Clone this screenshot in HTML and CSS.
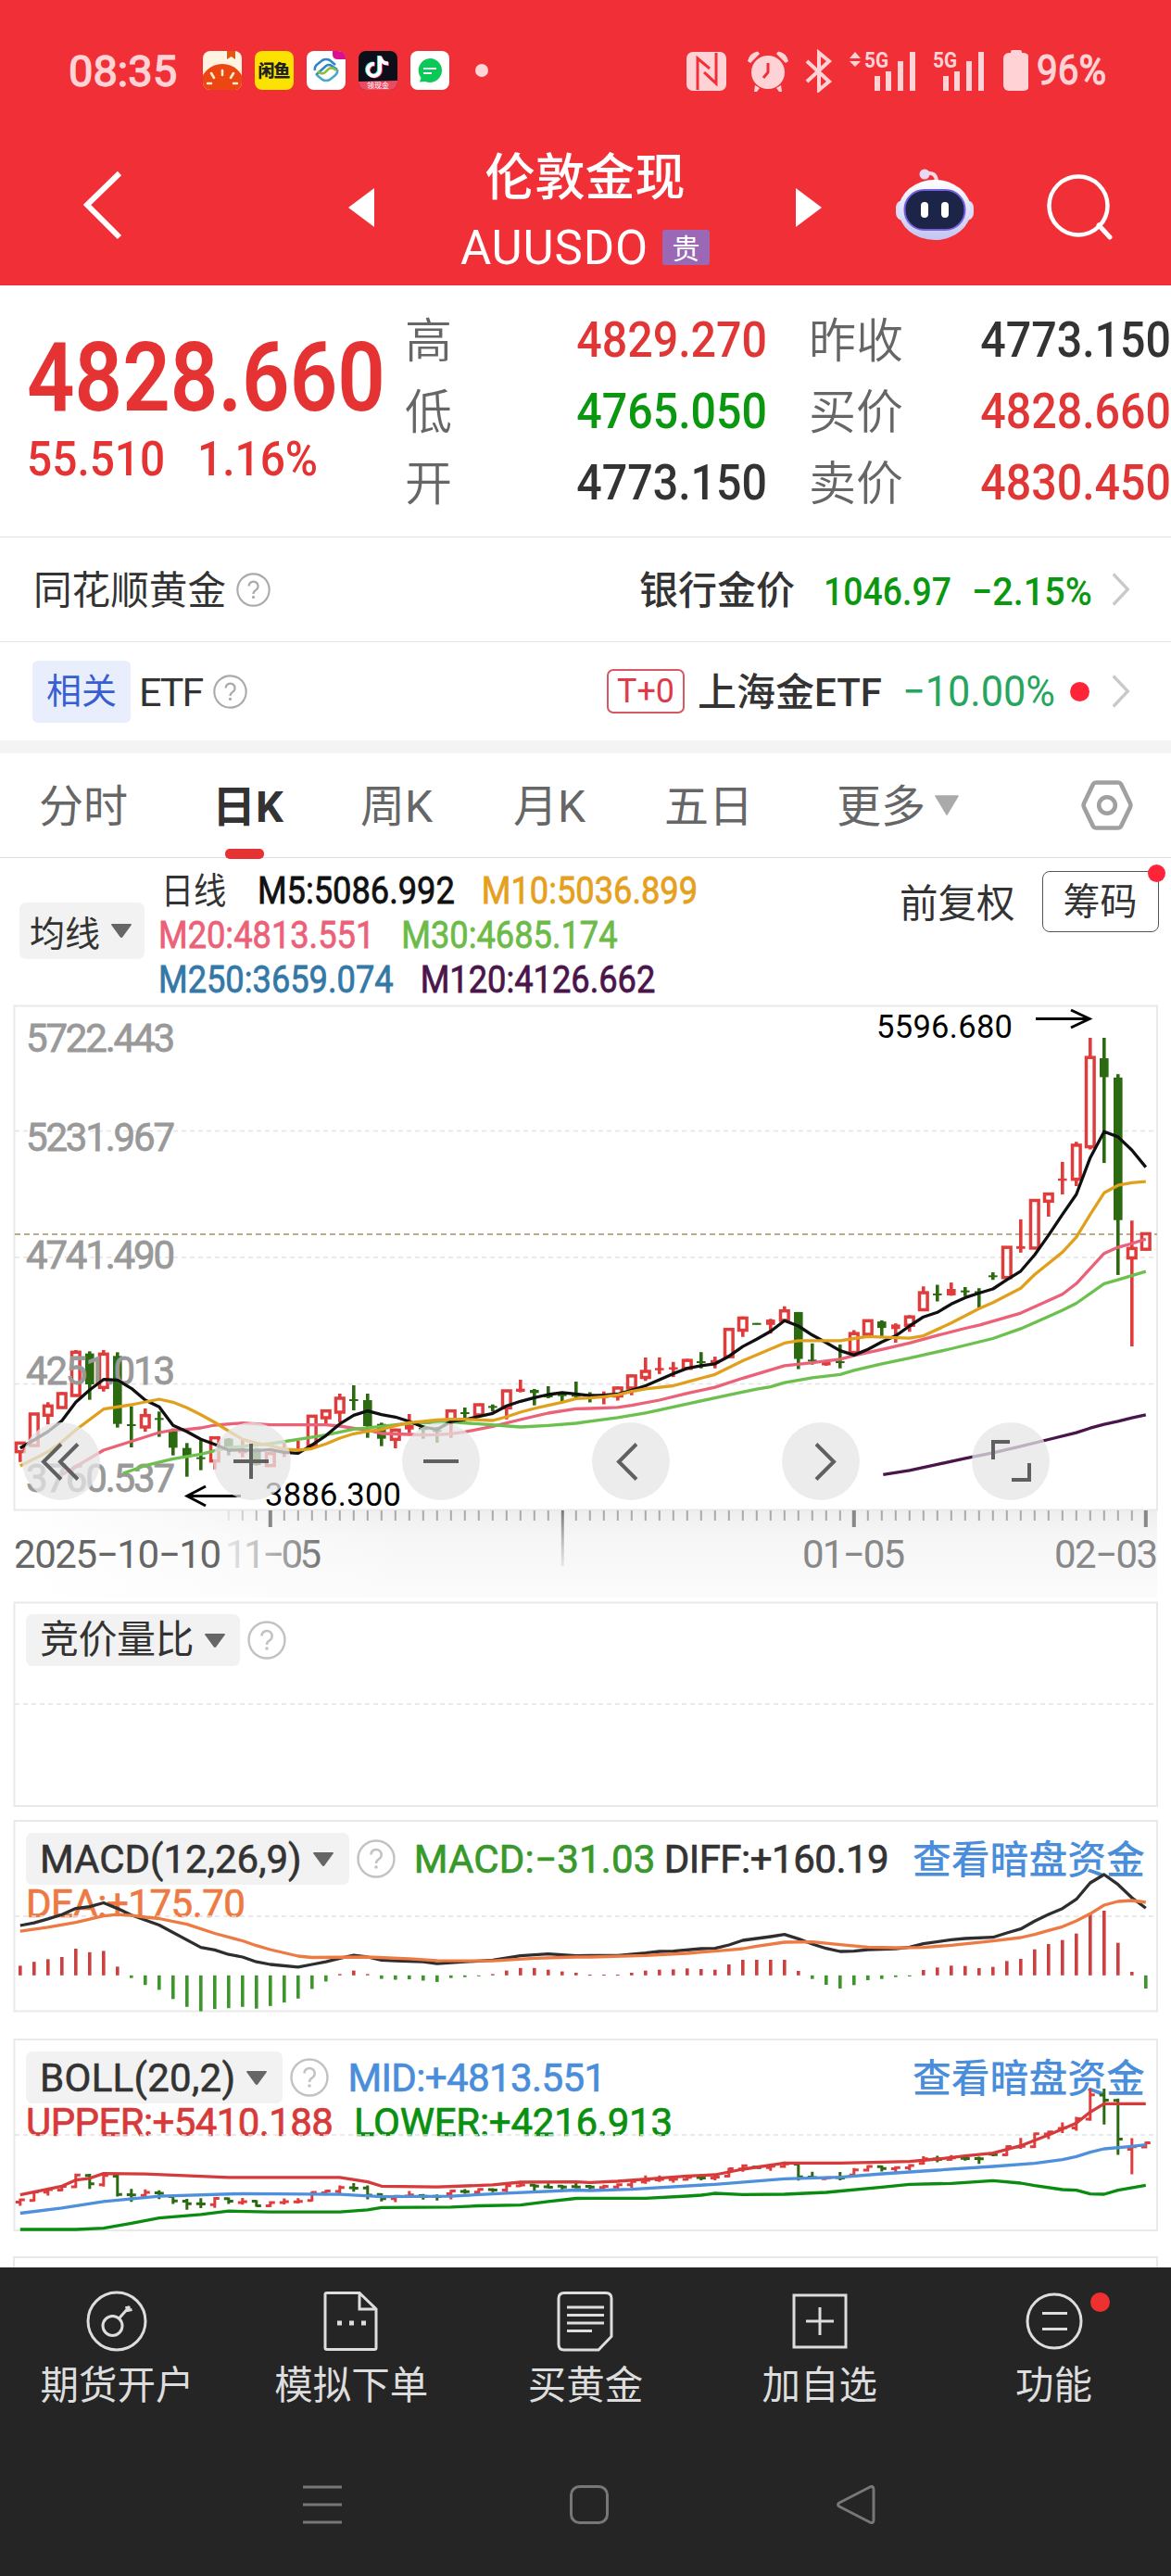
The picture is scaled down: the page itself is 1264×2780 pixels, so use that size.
FILE: index.html
```html
<!DOCTYPE html>
<html lang="zh-CN">
<head>
<meta charset="utf-8">
<title>伦敦金现 AUUSDO</title>
<link rel="stylesheet" href="styles.css">
</head>
<body>
<svg class="defs" width="0" height="0">
  <symbol id="help" viewBox="0 0 42 42"><circle cx="21" cy="21" r="19.5" fill="none" stroke="currentColor" stroke-width="2.4"/><path d="M15.5 16.5a5.6 5.6 0 1 1 8.4 4.9c-2 1.2-2.9 2-2.9 4.6" fill="none" stroke="currentColor" stroke-width="2.5"/><circle cx="21" cy="30" r="1.8" fill="currentColor"/></symbol>
  <symbol id="chev" viewBox="0 0 24 42"><path d="M3 3l17 18L3 39" fill="none" stroke="#c9c9c9" stroke-width="3.6"/></symbol>
  <symbol id="drop" viewBox="0 0 22 15"><path d="M1 0h20q1.500 0 .6 1.500L12.500 14q-1.500 1.800-3 0L.4 1.500Q-.5 0 1 0z" fill="#666"/></symbol>
</svg>

<header class="top">
  <div class="status">
    <span class="clock">08:35</span>
    <svg class="apps" width="320" height="42" viewBox="219 55 320 42">
      <clipPath id="r1"><rect x="219" y="55" width="42" height="42" rx="8"/></clipPath>
      <clipPath id="r4"><rect x="387" y="55" width="42" height="42" rx="8"/></clipPath>
      <g clip-path="url(#r1)"><path fill="#fff3e2" d="M219 55h42v42h-42z"/><path fill="#e2560f" d="M245 55h9v9l-4.500-3-4.500 3z"/><circle cx="240" cy="93" r="24" fill="#ec4713"/><path d="M240 82v-5M231 85l-3-5M249 85l3-5M228 91h-4M252 91h4" transform="translate(0 -1)" stroke="#fff0cf" stroke-width="2.600" stroke-linecap="round"/></g>
      <rect x="275" y="55" width="42" height="42" rx="8" fill="#fbe200"/><text x="278.500" y="83" class="app-cn" textLength="35">闲鱼</text>
      <rect x="331" y="55" width="42" height="42" rx="8" fill="#fff"/><path d="M359 55h6q8 0 8 8v1h-8q-6 0-6-5z" fill="#d9108f"/><g fill="none" stroke-width="2.600"><path d="M340 76q-1-4 3-7l5-4q4-2 8 0l6 5M341 81l11-10q3-2 6 0l6 4" stroke="#2f86c4"/><path d="M364 75q1 4-3 7l-5 4q-4 2-8 0l-6-5" stroke="#49a7c8"/><path d="M343 77q4 4 8 1l4-4q4-2 8 2" stroke="#8fbf3a"/></g>
      <g clip-path="url(#r4)"><path fill="#0c0e1a" d="M387 55h42v42h-42z"/><g fill="none" stroke-width="4"><path d="M409 60v15a6.500 6.500 0 1 1-6-6.500M409 61q2 7 9 7" stroke="#31e3e0"/><path d="M411 61v15a6.500 6.500 0 1 1-6-6.500M411 62q2 7 9 7" stroke="#fe2c55"/><path d="M410 60.500v15a6.500 6.500 0 1 1-6-6.500M410 61.500q2 7 9 7" stroke="#fff"/></g><path fill="#ea4a62" d="M387 88l42-1v10h-42z"/><text x="396" y="95" class="app-tag">领现金</text></g>
      <rect x="443" y="55" width="42" height="42" rx="8" fill="#fff"/><path d="M464 63a13 13 0 1 1-5 25l-6 .5 1.500-4.500A13 13 0 0 1 464 63z" fill="#0bc956"/><path d="M457 74h14M457 79h9" stroke="#fff" stroke-width="1.800"/>
      <circle cx="520" cy="76" r="7" fill="#ffd5d7"/>
    </svg>
    <svg class="sys" width="370" height="48" viewBox="740 51 370 48">
      <g fill="#ffd3d6">
        <rect x="741" y="55" width="43" height="42" rx="7"/><path d="M753 96V62l13 11M773 56v33l-13-12" fill="none" stroke="#f12f37" stroke-width="3"/>
        <circle cx="829" cy="77" r="18"/><path d="M807 65q2-9 11-10.500l2 2.500-10 10zM851 65q-2-9-11-10.500l-2 2.500 10 10zM815 91l5 3-3 4h-3zM843 91l-5 3 3 4h3z"/><path d="M829 67v10l-5 6" fill="none" stroke="#f12f37" stroke-width="3"/>
        <path d="M871 65l24 22-11 9V56l11 9-24 22" fill="none" stroke="#ffd3d6" stroke-width="4"/>
        <path d="M917 62l6-7 6 7zM917 65h12l-6 6zM944 81h6v16h-6zM956 76h6v21h-6zM969 65h6v32h-6zM982 55h6v42h-6zM1018 81h6v16h-6zM1030 76h6v21h-6zM1043 65h6v32h-6zM1056 55h6v42h-6z"/>
        <rect x="1083" y="56" width="28" height="41" rx="6"/><rect x="1091" y="53" width="12" height="6" rx="2"/>
        <text x="933" y="72" class="g5" textLength="26" lengthAdjust="spacingAndGlyphs">5G</text><text x="1007" y="72" class="g5" textLength="26" lengthAdjust="spacingAndGlyphs">5G</text>
      </g>
    </svg>
    <span class="batt">96%</span>
  </div>
  <div class="bar">
    <svg class="back" width="44" height="76" viewBox="90 183 44 76"><path d="M129 187L94 221l35 35" fill="none" stroke="#fff" stroke-width="6"/></svg>
    <svg class="prev" width="28" height="42" viewBox="0 0 28 42"><path d="M28 0v42L0 21z" fill="#fff"/></svg>
    <div class="title"><h1>伦敦金现</h1><p><span>AUUSDO</span><b>贵</b></p></div>
    <svg class="next" width="28" height="42" viewBox="0 0 28 42"><path d="M0 0v42l28-21z" fill="#fff"/></svg>
    <svg class="bot" width="86" height="80" viewBox="966 181 86 80">
      <defs><linearGradient id="bg" x2="0" y2="1"><stop stop-color="#fff"/><stop offset="1" stop-color="#c3c4f2"/></linearGradient></defs>
      <path d="M999 187q11-2 12 8" fill="none" stroke="#f6d9e6" stroke-width="4"/><circle cx="998" cy="188" r="5.500" fill="#e9d9f2"/>
      <rect x="967" y="216" width="84" height="22" rx="8" fill="#dcdcfa"/><ellipse cx="1009" cy="226.500" rx="39" ry="32.500" fill="url(#bg)"/>
      <rect x="976.500" y="205" width="65" height="43" rx="21" fill="#1c2447" stroke="#7460e0" stroke-width="2"/><rect x="994" y="218" width="8" height="17" rx="4" fill="#fff"/><rect x="1016" y="218" width="8" height="17" rx="4" fill="#fff"/>
    </svg>
    <svg class="find" width="72" height="72" viewBox="1130 187 72 72"><circle cx="1164" cy="222" r="31.500" fill="none" stroke="#fff" stroke-width="4.500"/><path d="M1186 243l12 13" stroke="#fff" stroke-width="5" stroke-linecap="round"/></svg>
  </div>
</header>

<section class="quote">
  <div class="last"><div class="price"><span>4828.660</span></div><div class="chg"><span>55.510</span><span>1.16%</span></div></div>
  <dl class="q1"><dt>高</dt><dd class="up">4829.270</dd><dt>低</dt><dd class="dn">4765.050</dd><dt>开</dt><dd>4773.150</dd></dl>
  <dl class="q2"><dt>昨收</dt><dd>4773.150</dd><dt>买价</dt><dd class="up">4828.660</dd><dt>卖价</dt><dd class="up">4830.450</dd></dl>
</section>

<section class="row row-a">
  <span class="name">同花顺黄金</span><svg class="h36"><use href="#help"/></svg>
  <span class="push strong">银行金价</span><span class="n1">1046.97</span><span class="n2">−2.15%</span><svg class="go"><use href="#chev"/></svg>
</section>
<section class="row row-b">
  <span class="rel">相关</span><span class="etf">ETF</span><svg class="h36"><use href="#help"/></svg>
  <span class="push t0">T+0</span><span class="strong shetf">上海金ETF</span><span class="n3">−10.00%</span><i class="dot"></i><svg class="go"><use href="#chev"/></svg>
</section>

<nav class="tabs">
  <a>分时</a><a class="on">日K</a><a>周K</a><a>月K</a><a>五日</a><a class="more">更多</a>
  <svg class="tri" width="26" height="22" viewBox="0 0 26 22"><path d="M1 1h24L13 21z" fill="#aaa" stroke="#aaa" stroke-width="1.500" stroke-linejoin="round"/></svg>
  <svg class="hex" width="58" height="56" viewBox="0 0 58 56"><path d="M17 3.500h24q2 0 3 1.700L54 26q1 2 0 4L44 50.800q-1 1.700-3 1.700H17q-2 0-3-1.700L4 30q-1-2 0-4L14 5.200q1-1.700 3-1.700z" fill="none" stroke="#a0a0a0" stroke-width="4.600"/><circle cx="29" cy="28" r="8.800" fill="none" stroke="#a0a0a0" stroke-width="4.600"/></svg>
</nav>

<section class="legend">
  <div class="chip avg">均线<svg class="dr"><use href="#drop"/></svg></div>
  <div class="mas">
    <p><span class="day">日线</span><span class="m5">M5:5086.992</span><span class="m10">M10:5036.899</span></p>
    <p><span class="m20">M20:4813.551</span><span class="m30">M30:4685.174</span></p>
    <p><span class="m250">M250:3659.074</span><span class="m120">M120:4126.662</span></p>
  </div>
  <span class="fq">前复权</span><span class="cm">筹码<i></i></span>
</section>

<section class="kchart">
  <svg id="k" width="1264" height="644" viewBox="0 1080 1264 644">
    <defs>
      <linearGradient id="shv" x2="0" y2="1"><stop stop-color="#eee"/><stop offset=".3" stop-color="#f6f6f6"/><stop offset="1" stop-color="#fbfbfb"/></linearGradient>
      <linearGradient id="shh"><stop stop-color="#fff"/><stop offset=".35" stop-color="#fff" stop-opacity="0"/></linearGradient>
      <linearGradient id="fade" gradientUnits="userSpaceOnUse" x1="240" x2="345" y1="0" y2="0"><stop stop-color="#777" stop-opacity=".1"/><stop offset="1" stop-color="#777"/></linearGradient>
      <linearGradient id="longtick" gradientUnits="userSpaceOnUse" x1="0" x2="0" y1="1630" y2="1692"><stop stop-color="#777"/><stop offset="1" stop-color="#aaa" stop-opacity=".2"/></linearGradient>
    </defs>
    <rect x="15" y="1630" width="1234" height="94" fill="url(#shv)"/><rect x="14" y="1630" width="1236" height="94" fill="url(#shh)"/>
    <path d="M15.500 1629.500V1085.500H1249V1629.500z" class="frame"/>
    <path d="M16 1220.500H1249M16 1357H1249M16 1493.500H1249" class="grid"/>
    <path d="M16 1332H1249" stroke="#b9ad86" stroke-width="2" stroke-dasharray="6 4"/>
    <g id="ticks"></g><g id="candles"></g>
    <g class="scale"><text x="28" y="1135" textLength="161">5722.443</text><text x="28" y="1242" textLength="161">5231.967</text><text x="28" y="1369" textLength="161">4741.490</text><text x="28" y="1494" textLength="161">4251.013</text><text x="28" y="1610" textLength="161">3760.537</text></g>
    <g id="mas" class="line"></g>
    <g class="mark"><text x="946" y="1120" textLength="147">5596.680</text><text x="286" y="1625" textLength="147">3886.300</text><path d="M1118 1099.500h56M1156 1090l20 9.500-20 9.500M260 1614.500h-57M222 1604l-20 10.500 20 10.500"/></g>
    <g class="date"><text x="15" y="1692" textLength="224" fill="#666">2025−10−10</text><text x="243" y="1692" textLength="104" fill="url(#fade)">11−05</text><text x="866" y="1692" textLength="111" fill="#888">01−05</text><text x="1138" y="1692" textLength="112" fill="#888">02−03</text></g>
    <g fill="#e6e6e6" fill-opacity=".75"><circle cx="66" cy="1577" r="42"/><circle cx="272" cy="1577" r="42"/><circle cx="476" cy="1577" r="42"/><circle cx="681" cy="1577" r="42"/><circle cx="886" cy="1577" r="42"/><circle cx="1091" cy="1577" r="42"/></g>
    <path class="ctl" d="M66 1558.500l-19 19 19 19M84 1558.500l-19 19 19 19M252 1577h38M271 1558v38M457 1577h38M687 1558.500l-19 19 19 19M881 1558.500l19 19-19 19M1072 1575v-19h18M1111 1579v18h-19"/>
  </svg>
</section>

<section class="panel p1">
  <svg class="art" width="1264" height="224" viewBox="0 1727 1264 224"><path d="M15.500 1729.500H1249V1949H15.500z" class="frame"/><path d="M16 1839H1249" class="grid"/></svg>
  <div class="head"><span class="chip">竞价量比<svg class="dr"><use href="#drop"/></svg></span><svg class="h42"><use href="#help"/></svg></div>
</section>
<section class="panel p2">
  <div class="head"><span class="chip"><span class="lat">MACD(12,26,9)</span><svg class="dr"><use href="#drop"/></svg></span><svg class="h42"><use href="#help"/></svg><span class="v macd">MACD:−31.03</span><span class="v diff">DIFF:+160.19</span><a>查看暗盘资金</a></div>
  <div class="sub"><span class="dea">DEA:+175.70</span></div>
  <svg class="art" id="macd" width="1264" height="210" viewBox="0 1963 1264 210"><path d="M15.500 1965H1249V2170.500H15.500z" class="frame"/><path d="M16 2068H1249" class="grid"/></svg>
</section>
<section class="panel p3">
  <div class="head"><span class="chip"><span class="lat boll">BOLL(20,2)</span><svg class="dr"><use href="#drop"/></svg></span><svg class="h42"><use href="#help"/></svg><span class="v mid">MID:+4813.551</span><a>查看暗盘资金</a></div>
  <div class="sub"><span class="upper">UPPER:+5410.188</span><span class="lower">LOWER:+4216.913</span></div>
  <svg class="art" id="boll" width="1264" height="210" viewBox="0 2199 1264 210"><path d="M15.500 2201H1249V2407H15.500z" class="frame"/><path d="M16 2304H1249" class="grid"/></svg>
</section>
<div class="peek"></div>

<footer>
  <nav class="acts">
    <a><svg width="66" height="66" viewBox="0 0 66 66"><circle cx="33" cy="33" r="31"/><circle cx="28.500" cy="38" r="10.500"/><path d="M35.500 30L47 17M43.500 17l1 4.500 5-1"/></svg>期货开户</a>
    <a><svg width="66" height="66" viewBox="0 0 66 66"><path d="M5 4q0-1.500 2-1.500h35l18 17.500v42q0 1.500-2 1.500H7q-2 0-2-1.500zM42 3v17h18"/><path d="M18 35h5M31 35h5M44 35h5" stroke-width="5"/></svg>模拟下单</a>
    <a><svg width="66" height="66" viewBox="0 0 66 66"><path d="M10 2.500h45q6 0 6 6v41L47 64H10q-6 0-6-6V8.500q0-6 6-6zM13 18h40M13 26.500h40M13 35h40M13 43.500h27"/></svg>买黄金</a>
    <a><svg width="66" height="66" viewBox="0 0 66 66"><path d="M5 5h56v56H5zM33 18v30M18 33h30"/></svg>加自选</a>
    <a><svg width="66" height="66" viewBox="0 0 66 66"><circle cx="33" cy="33" r="29"/><path d="M20 24.500h27M20 41.500h27"/></svg>功能<i></i></a>
  </nav>
  <div class="keys">
    <svg width="42" height="42" viewBox="0 0 42 42"><path d="M0 2h42M0 21h42M0 40h42"/></svg>
    <svg width="42" height="42" viewBox="0 0 42 42"><rect x="1.500" y="1.500" width="39" height="39" rx="9"/></svg>
    <svg width="42" height="42" viewBox="0 0 42 42"><path d="M36 2q4-2 4 3v32q0 5-4 3L3 23q-3-2 0-4z"/></svg>
  </div>
</footer>
<script src="chart.js"></script>
</body>
</html>
```
FILE: styles.css
```css
* { box-sizing: border-box; margin: 0; padding: 0; }
body { width: 1264px; height: 2780px; overflow: hidden; background: #fff; color: #333; font-family: Roboto, "Noto Sans CJK SC", sans-serif; }
svg { display: block; flex: none; }
span, a, dt, dd { white-space: nowrap; }
.defs { position: absolute; }
.top { height: 308px; background: #f12f37; color: #fff; }
.status { height: 124px; padding: 28px 0 0 74px; display: flex; align-items: center; color: #ffd3d6; }
.clock { width: 145px; font-size: 47px; -webkit-text-stroke: 1.4px; }
.apps { margin-right: 201px; }
.batt { margin-left: 9px; font-size: 44px; -webkit-text-stroke: 1.2px; transform: scaleX(.92); transform-origin: left; }
.app-cn { font: 900 18px "Noto Sans CJK SC"; fill: #222; }
.app-tag { font: 8px "Noto Sans CJK SC"; fill: #fff; }
.g5 { font: 700 23px Roboto; }
.bar { height: 184px; display: flex; }
.back { margin: 59px 0 0 90px; }
.prev { margin: 79px 0 0 242px; }
.title { width: 455px; text-align: center; }
.title h1 { margin-top: 31px; font: 500 54px/66px "Noto Sans CJK SC"; }
.title p { margin-top: 19px; display: flex; justify-content: center; align-items: center; height: 54px; font-size: 51px; }
.title p span { letter-spacing: .9px; }
.title b { margin-left: 15px; width: 51px; height: 38px; background: #9a68b4; border-radius: 3px; font: 400 30px/36px "Noto Sans CJK SC"; }
.next { margin-top: 79px; }
.bot { margin: 57px 0 0 79px; }
.find { margin: 63px 0 0 78px; }

.quote { height: 272px; border-bottom: 1.5px solid #e1e1e1; display: flex; padding-top: 18px; }
.last { width: 437px; padding-left: 29px; color: #e53333; }
.price { height: 110px; margin-top: 27px; font-size: 103px; line-height: 110px; font-weight: 600; }
.price span { display: block; transform: scaleX(.877); transform-origin: left; }
.chg { display: flex; font-size: 52px; line-height: 60px; margin-top: 3px; font-weight: 500; }
.chg span { width: 184px; transform: scaleX(.92); transform-origin: left; }
dl { display: grid; grid-auto-rows: 77px; line-height: 77px; }
.q1 { width: 391px; grid-template-columns: 90px 1fr; }
.q2 { width: 436px; padding-left: 45px; grid-template-columns: 120px 1fr; }
dt { font-size: 51px; color: #666; font-weight: 350; font-family: "Noto Sans CJK SC"; }
dd { font-size: 53px; font-weight: 500; text-align: right; transform: scaleX(.912); transform-origin: right; padding-top: 3px; }
.up { color: #e03636; }
.dn { color: #0b970f; }

.row { display: flex; align-items: center; padding-right: 43px; }
.row-a { height: 113px; border-bottom: 1.5px solid #e4e4e4; padding-left: 36px; }
.row-b { height: 106px; padding-left: 35px; }
.name { font-size: 41.6px; line-height: 60px; padding-top: 4px; }
.h36 { width: 37px; height: 37px; color: #aaa; margin-left: 11px; }
.push { margin-left: auto; }
.strong { font-size: 42px; line-height: 60px; font-weight: 500; padding-top: 4px; }
.n1, .n2 { color: #0b970f; font-size: 43px; font-weight: 500; transform-origin: left; padding-top: 3px; }
.n1 { width: 160px; margin-left: 31px; transform: scaleX(.87); }
.n2 { width: 127px; transform: scaleX(.92); }
.go { width: 22px; height: 40px; margin-left: 23px; }
.rel { width: 106px; height: 67px; border-radius: 6px; background: #e8eefc; color: #385fd2; font-size: 38px; line-height: 67px; text-align: center; }
.etf { font-size: 43px; margin-left: 9px; width: 70px; letter-spacing: -2px; padding-top: 2px; }
.row-b .h36 { margin-left: 10px; }
.row-b .t0 { width: 84px; height: 48px; border: 2px solid #d75762; border-radius: 7px; color: #dd3b4c; font-size: 36px; line-height: 44px; text-align: center; }
.shetf { width: 201px; margin-left: 14px; letter-spacing: 0; }
.n3 { width: 164px; margin-left: 20px; color: #26a55e; font-size: 46px; transform: scaleX(.94); transform-origin: left; }
.dot { width: 21px; height: 21px; border-radius: 50%; background: #ff2438; margin-left: 17px; }

.tabs { height: 127px; border-top: 14px solid #f4f4f4; border-bottom: 1.5px solid #ddd; display: flex; align-items: center; font-size: 48px; line-height: 70px; color: #666; }
.tabs a { position: relative; top: 2px; }
.tabs a:nth-child(1) { margin-left: 42px; width: 187px; }
.tabs a:nth-child(2) { width: 160px; color: #333; font-weight: 700; font-size: 47px; }
.tabs a:nth-child(3) { width: 165px; }
.tabs a:nth-child(4) { width: 163px; }
.tabs a:nth-child(5) { width: 186px; }
.tabs a:nth-child(6) { width: 106px; }
.tabs .on::after { content: ""; position: absolute; left: 14px; bottom: -21px; width: 42px; height: 11px; border-radius: 5px; background: #e53333; }
.hex { margin-left: 131px; }

.legend { height: 154px; display: flex; position: relative; }
.chip { display: flex; align-items: center; background: #f2f2f2; border-radius: 7px; }
.dr { width: 22px; height: 15px; margin-left: 12px; }
.avg { width: 135px; height: 61px; margin: 48px 0 0 21px; padding-left: 11px; font-size: 38px; }
.mas { width: 800px; margin: 11px 0 0 15px; transform: scaleX(.906); transform-origin: left; }
.mas p { height: 48px; line-height: 50px; font-size: 40px; display: flex; gap: 32px; }
.day { font-size: 39px; width: 84px; margin-left: 3px; }
.mas .day { margin-right: -1px; }
.m5 { color: #111; } .m10 { color: #e5a01e; } .m20 { color: #eb6178; } .m30 { color: #6cbb49; } .m250 { color: #3478a8; } .m120 { color: #4a154b; }
.mas p span:not(.day) { -webkit-text-stroke: .8px; }
.fq { margin: 20px 0 0 0; font-size: 41.500px; line-height: 60px; }
.cm { position: relative; margin: 14px 0 0 29px; width: 126px; height: 66px; border: 1.5px solid #555; border-radius: 8px; font-size: 40px; line-height: 66px; text-align: center; }
.cm i { position: absolute; right: -8px; top: -8px; width: 19px; height: 19px; border-radius: 50%; background: #ff2438; }

.kchart { height: 647px; }
.frame { fill: none; stroke: #e9e9e9; stroke-width: 2; }
.grid { stroke: #e4e4e4; stroke-width: 1.5; stroke-dasharray: 5 4; }
.scale, .date { font: 42px Roboto; }
.scale text, .date text { stroke-width: .8px; }
.scale { fill: #999; stroke: #999; }
.mark { font: 34.500px Roboto; fill: #000; }
.mark path { fill: none; stroke: #000; stroke-width: 3; }
.line { fill: none; stroke-linejoin: round; }
.ctl { fill: none; stroke: #606060; stroke-width: 4; }

.panel { position: relative; height: 236px; }
.art { position: absolute; left: 0; top: 0; }
.head { display: flex; align-items: center; padding: 15px 0 0 28px; height: 71px; font-size: 42px; position: relative; }
.head .chip { height: 56px; padding: 0 17px 0 15px; }
.p1 .chip { padding-right: 16px; letter-spacing: -.5px; line-height: 52px; }
.head .h42 { width: 42px; height: 42px; margin-left: 8px; color: #c2c2c2; }
.head a { position: absolute; left: 985px; top: 15px; font-size: 41.8px; line-height: 60px; color: #4a8edb; font-weight: 500; }
.v { -webkit-text-stroke: .7px; }
.lat { -webkit-text-stroke: .6px; }
.lat.boll { letter-spacing: .3px; }
.macd { margin-left: 20px; color: #38982a; width: 270px; letter-spacing: .2px; }
.diff { color: #333; letter-spacing: -.5px; }
.mid { margin-left: 20px; color: #4a8edb; letter-spacing: -.6px; }
.sub { display: flex; padding-left: 28px; height: 44px; line-height: 44px; margin-top: -1px; font-size: 42px; -webkit-text-stroke: .7px; }
.dea { color: #ee7a43; letter-spacing: -.5px; }
.upper { color: #d83a3a; width: 354px; letter-spacing: -.6px; }
.lower { color: #0a9010; letter-spacing: -.25px; }
.peek { height: 12px; margin: 0 14px; border: 2px solid #e9e9e9; border-bottom: 0; }

footer { height: 333px; background: #252525; color: #ddd; }
.acts { display: flex; padding-top: 25px; height: 170px; }
.acts a { position: relative; flex: 1; display: flex; flex-direction: column; align-items: center; font-size: 41.5px; line-height: 60px; gap: 7px; }
.acts svg { fill: none; stroke: #ddd; stroke-width: 3; }
.acts i { position: absolute; left: 166px; top: 2px; width: 21px; height: 21px; border-radius: 50%; background: #ee3030; }
.keys { display: flex; padding: 65px 0 0 327px; gap: 246px; }
.keys svg { fill: none; stroke: #777; stroke-width: 3; }
```
FILE: chart.js
```js
// Bars sit on a fixed pitch; y values are given per segment as base + v * unit.
const NS = 'http://www.w3.org/2000/svg';
const X = i => 21.8 + i * 15;
const KA = v => 1400 + v / 3, KB = v => 1080 + v / 2.45;
const IA = v => 1700 + v / 2.119, IB = v => 1940 + v / 3;
const $ = id => document.getElementById(id);
function add(parent, tag, attrs) {
  const e = document.createElementNS(NS, tag);
  for (const k in attrs) e.setAttribute(k, attrs[k]);
  parent.appendChild(e);
}
function line(parent, color, fa, a, fb, b, w) {
  const pt = f => ([i, v]) => X(i).toFixed(1) + ',' + f(v).toFixed(1);
  add(parent, 'polyline', { points: [...a.map(pt(fa)), ...b.map(pt(fb))].join(' '), fill: 'none', stroke: color, 'stroke-width': w || 3.3, 'stroke-linejoin': 'round' });
}

// [kind, high, body top, body bottom, low]; r = hollow rise, s = filled rise, g = fall
const early = [
  ['r',470,472,500,533],['r',378,378,480,480],['r',340,352,382,412],['r',307,312,357,360],['r',171,178,318,320],
  ['g',175,182,282,332],['r',171,184,292,305],['g',178,190,410,422],['g',353,411,415,486],['r',360,383,420,435],
  ['g',370,391,395,452],['g',425,433,487,512],['g',472,488,518,581],['g',463,518,523,560],['r',450,455,530,557],
  ['g',456,458,490,512],['s',462,495,505,518],['g',488,490,543,545],['r',500,506,545,547],['s',468,495,505,517],
  ['s',465,491,496,505],['r',382,385,480,482],['r',365,368,390,408],['r',312,327,372,405],['g',285,330,335,366],
  ['g',312,333,417,455],['g',406,410,458,482],['r',425,430,460,489],['s',378,414,428,440],['g',415,422,430,458],
  ['g',420,430,434,471],['r',365,368,400,455],['g',357,372,377,390],['r',345,348,381,383],['g',347,352,356,370],
  ['r',300,303,358,395],['s',267,296,306,308],['g',297,300,310,350],['g',288,318,323,327],['g',308,310,320,340],['g',273,316,322,327]
];
const late = [
  ['g',1035,1040,1046,1062],['s',1033,1040,1050,1067],['r',1020,1024,1045,1057],['r',988,992,1024,1043],['r',943,980,996,1005],
  ['s',943,971,977,987],['s',955,969,975,995],['r',947,951,972,975],['g',929,953,958,972],['s',941,950,959,972],
  ['r',868,869,941,942],['r',835,839,871,889],['g',852,852,856,856],['s',841,843,857,880],['r',808,820,845,850],
  ['g',823,823,947,974],['g',906,949,953,962],['s',954,955,964,965],['g',909,953,958,972],['r',871,880,930,935],
  ['r',843,846,882,886],['g',845,848,865,887],['s',853,856,868,904],['r',831,836,858,875],['r',755,772,817,819],
  ['g',751,774,778,795],['s',745,762,779,780],['g',757,766,770,781],['g',760,768,772,812],['g',718,726,730,738],
  ['r',650,652,732,735],['s',578,649,656,666],['r',526,528,654,656],['r',507,511,530,571],['s',426,470,476,512],
  ['r',373,382,472,490],['r',98,150,386,393],['g',98,152,202,429],['g',194,203,580,725],['r',581,655,680,914],['r',613,616,657,660]
];
const bars = [...early.map(([k, ...v]) => [k, ...v.map(KA)]), ...late.map(([k, ...v]) => [k, ...v.map(KB)])];
bars.forEach(([k, h, t, b, l], i) => {
  const c = k === 'g' ? '#2c6a12' : '#e03c3c', x = X(i), g = $('candles');
  if (k === 'r') {
    add(g, 'path', { d: `M${x} ${h}V${t}M${x} ${b}V${l}`, stroke: c, 'stroke-width': 3.6 });
    add(g, 'rect', { x: x - 4.3, y: t, width: 8.6, height: Math.max(b - t, 3), fill: 'none', stroke: c, 'stroke-width': 3.5 });
  } else {
    add(g, 'path', { d: `M${x} ${h}V${l}`, stroke: c, 'stroke-width': 3.6 });
    add(g, 'rect', { x: x - 4.8, y: t, width: 9.6, height: Math.max(b - t, 2), fill: c });
  }
});

for (let i = 15; i <= 81; i++) {
  const major = (i - 18) % 21 === 0;
  const y = i === 39 ? 1690 : major ? 1648 : 1641;
  add($('ticks'), 'rect', { x: X(i) - (major && i !== 39 ? 2 : 1), y: 1630, width: major ? (i === 39 ? 3 : 4) : 2, height: y - 1630, fill: i === 39 ? 'url(#longtick)' : major ? '#888' : '#aaa', opacity: i < 18 ? .25 * (i - 14) : 1 });
}

const m = $('mas');
line(m, '#eb6178', KA, [[3,575],[6,495],[10,438],[11,430],[12,428],[13,423],[14,414],[16,407],[17,410],[18,413],[22,413],[23,417],[24,424],[25,430],[26,441],[28,444],[29,446],[30,445],[31,442],[32,436],[34,418],[36,396],[38,375],[40,361]],
  KB, [[41,1078],[43,1075],[44,1070],[46,1056],[48,1038],[50,1022],[52,998],[55,965],[57,957],[59,948],[60,938],[62,922],[64,905],[66,885],[68,866],[69,858],[72,826],[75,776],[76,748],[78,668],[79,652],[80,642],[81,630]]);
line(m, '#6cc04d', KA, [[7.400,570],[9,545],[11,523],[13,508],[14,497],[15,487],[18,474],[20,460],[22,446],[24,427],[26,418],[28,408],[31,404],[33,410],[36,420],[38,415],[40,408]],
  KB, [[41,1112],[43,1102],[45,1090],[48,1066],[51,1042],[53,1027],[54,1021],[55,1010],[57,997],[59,988],[60,977],[62,960],[64,945],[67,920],[70,893],[72,867],[74,835],[75,818],[76,800],[78,748],[79,738],[81,716]]);
line(m, '#101010', KA, [[0,488],[1,462],[2,435],[3,400],[4,340],[5,300],[6,266],[7,268],[8,295],[9,333],[10,355],[11,415],[12,435],[13,460],[14,476],[15,495],[16,494],[17,497],[18,493],[19,502],[20,505],[21,478],[22,448],[23,410],[24,382],[25,368],[26,380],[27,388],[28,402],[29,420],[30,428],[31,402],[32,396],[33,386],[34,376],[35,352],[36,337],[37,325],[38,315],[39,309],[40,313]],
  KB, [[41,1044],[42,1043],[43,1040],[44,1030],[45,1018],[46,1002],[47,986],[48,972],[49,965],[50,960],[51,940],[52,914],[53,895],[54,874],[55,846],[56,860],[57,884],[58,904],[59,925],[60,937],[61,922],[62,902],[63,886],[64,860],[65,836],[66,824],[67,802],[68,785],[69,773],[70,762],[71,738],[72,715],[73,672],[74,620],[75,565],[76,512],[77,415],[78,346],[79,360],[80,395],[81,440]]);
line(m, '#e0a01c', KA, [[0,546],[2,500],[3,468],[4,430],[6,362],[8,348],[10,330],[11,340],[12,358],[13,380],[14,405],[15,433],[16,460],[17,472],[18,480],[19,492],[20,495],[21,490],[22,475],[23,456],[24,442],[25,434],[26,428],[27,416],[28,406],[29,402],[30,397],[31,395],[32,395],[33,397],[34,399],[35,387],[36,372],[37,360],[38,350],[39,340],[40,328]],
  KB, [[41,1050],[42,1047],[43,1042],[44,1033],[45,1026],[47,1018],[48,1008],[50,988],[52,952],[55,905],[56,899],[59,899],[60,893],[61,888],[63,891],[64,892],[65,886],[67,852],[69,814],[70,798],[72,760],[73,724],[75,665],[76,625],[77,565],[78,508],[79,488],[80,481],[81,478]]);
line(m, '#4a154b', KA, [], KB, [[62.100,1253],[64,1242],[66,1226],[68,1210],[70,1195],[72,1178],[74,1160],[76,1142],[77,1130],[78,1120],[79,1112],[80,1103],[81,1095]]);

const mc = $('macd');
const ha = [893,884,878,873,854,862,859,895,921,937,948,969,987,997,992,990,987,991,985,977,968,946,929,912,904,912,923,925,924,927,930,921,919,917,912,904,898,898,902,906,909];
const hb = [573,573,573,567,560,557,556,553,555,557,540,525,525,525,525,561,587,606,618,607,591,587,581,579,558,550,544,545,552,548,529,522,491,474,461,440,376,366,470,564,618];
[...ha.map(IA), ...hb.map(IB)].forEach((y, i) => {
  const y0 = 2131.8;
  add(mc, 'rect', { x: X(i) - 1.8, y: Math.min(y, y0), width: 3.6, height: Math.max(Math.abs(y - y0), 1), fill: y > y0 ? '#3c962c' : '#cc4040' });
});
line(mc, '#2e2e2e', IA, [[0,801],[1,795],[2,786],[3,776],[4,762],[5,758],[6,749],[7,762],[8,777],[10,800],[13,851],[14,857],[15,867],[16,873],[17,884],[18,890],[20,896],[21,890],[22,884],[23,876],[24,869],[25,873],[26,880],[27,882],[29,884],[30,888],[32,884],[34,880],[36,870],[38,866],[40,870]],
  IB, [[41,511],[43,511],[45,503],[46,498],[47,497],[49,489],[50,488],[51,477],[52,462],[53,456],[54,450],[55,443],[56,457],[57,474],[58,488],[59,498],[60,497],[61,492],[63,489],[64,484],[65,473],[67,460],[68,456],[70,452],[71,438],[72,425],[73,400],[74,378],[75,359],[76,329],[77,276],[78,249],[79,281],[80,324],[81,358]]);
line(mc, '#ee7a43', IA, [[0,814],[2,805],[4,794],[6,779],[7,776],[8,778],[9,782],[10,785],[12,798],[14,819],[16,836],[17,847],[18,856],[20,871],[21,874],[25,873],[28,877],[30,881],[34,882],[37,876],[40,873]],
  IB, [[41,516],[45,511],[48,504],[51,493],[52,489],[53,481],[55,468],[57,467],[59,476],[61,484],[63,486],[65,485],[67,478],[70,464],[72,453],[73,443],[74,430],[75,418],[76,399],[77,376],[78,348],[79,336],[80,333],[81,339]]);

const bl = $('boll');
const B = y => 2255 + (y - 1120) * .272;
bars.forEach(([k, h, t, b, l], i) => {
  const up = k !== 'g', x = X(i), o = B(up ? b : t), c = B(up ? t : b);
  add(bl, 'path', { d: `M${x} ${B(h) - 1}V${B(l) + 1}M${x - 5} ${o}H${x}M${x} ${c}H${x + 5}`, stroke: up ? '#e03c3c' : '#2c6a12', 'stroke-width': 3 });
});
line(bl, '#d63a3a', IA, [[0,1417],[3,1397],[4,1383],[5,1379],[6,1368],[9,1369],[15,1377],[23,1377],[25,1387],[26,1397],[30,1399],[34,1394],[36,1388],[40,1387]],
  IB, [[41,1246],[43,1242],[46,1232],[48,1225],[50,1221],[52,1203],[55,1183],[59,1183],[62,1180],[64,1178],[66,1170],[68,1160],[70,1151],[72,1127],[74,1092],[76,1054],[77,1018],[78,991],[81,991]]);
line(bl, '#4f90dc', IA, [[0,1459],[3,1447],[6,1432],[10,1420],[16,1414],[23,1416],[26,1421],[31,1420],[35,1413],[40,1406]],
  IB, [[41,1272],[44,1268],[50,1252],[55,1234],[59,1229],[62,1218],[66,1206],[70,1194],[73,1184],[75,1172],[76,1162],[77,1148],[78,1137],[80,1129],[81,1124]]);
line(bl, '#0a8c10', IA, [[0,1496],[4,1496],[6,1493],[8,1482],[10,1470],[13,1462],[15,1454],[18,1456],[23,1456],[25,1451],[26,1446],[31,1445],[33,1442],[36,1440],[38,1432],[40,1425]],
  IB, [[41,1297],[45,1297],[48,1290],[49,1287],[50,1281],[52,1285],[55,1284],[58,1278],[62,1261],[64,1252],[67,1249],[70,1240],[72,1248],[73,1256],[75,1269],[76,1271],[77,1283],[78,1284],[79,1271],[81,1255]]);
```
